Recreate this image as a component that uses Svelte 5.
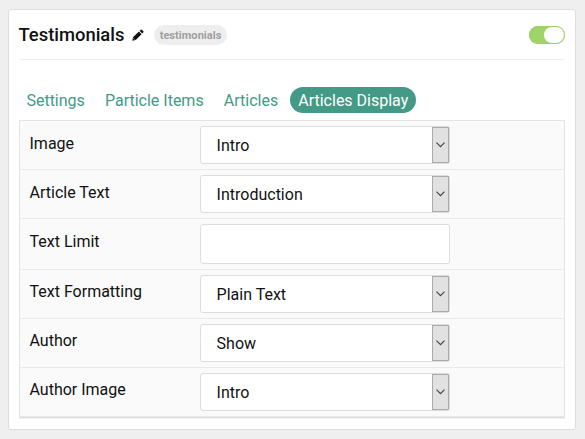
<script>
  const tabs = ['Settings', 'Particle Items', 'Articles', 'Articles Display'];
  const active = 'Articles Display';
  const fields = [
    { label: 'Image', value: 'Intro' },
    { label: 'Article Text', value: 'Introduction' },
    { label: 'Text Limit', input: true },
    { label: 'Text Formatting', value: 'Plain Text' },
    { label: 'Author', value: 'Show' },
    { label: 'Author Image', value: 'Intro' }
  ];
</script>

<main>
  <section class="card">
    <header>
      <h4>Testimonials</h4>
      <svg class="pencil" width="12" height="12" viewBox="0 0 12 12">
        <path fill="#111" d="M.3 11.7 1 8.2 6.9 2.5 9.6 5.2 3.8 11ZM7.6 1.8 8.8.7Q9.3.3 9.8.8L11.4 2.3Q11.8 2.8 11.4 3.3L10.2 4.5Z" />
        <path fill="none" stroke="#fff" stroke-width=".6" d="M1.5 9.3 2.8 10.6" />
      </svg>
      <span class="badge">testimonials</span>
      <span class="toggle"><i></i></span>
    </header>
    <nav>
      {#each tabs as tab}
        <a class:active={tab === active}>{tab}</a>
      {/each}
    </nav>
    <div class="panel">
      {#each fields as field, i}
        <div class="row">
          <span class="label" class:upper={i > 2}>{field.label}</span>
          {#if field.input}
            <div class="box input"></div>
          {:else}
            <div class="box">
              <span class="value">{field.value}</span>
              <span class="arrow">
                <svg width="9" height="6" viewBox="0 0 9 6">
                  <path d="M.5 .7 4.5 4.7 8.5 .7" fill="none" stroke="#444" stroke-width="1.15" />
                </svg>
              </span>
            </div>
          {/if}
        </div>
      {/each}
    </div>
  </section>
</main>

<style>
  :global(body) { background: #efefef; }
  main {
    box-sizing: border-box;
    height: 439px;
    padding: 9px 9px 9px 8px;
    font: 16px/24px Roboto, sans-serif;
    color: #111;
  }
  .card {
    box-sizing: border-box;
    height: 421px;
    padding: 0 10px;
    background: #fff;
    border: 1px solid #ddd;
    border-radius: 3px;
  }
  header {
    display: flex;
    align-items: center;
    box-sizing: border-box;
    height: 50px;
    border-bottom: 1px solid #eee;
  }
  h4 {
    margin: 0 0 0 -0.5px;
    width: 106.5px;
    font-size: 18.4px;
    font-weight: 500;
    white-space: nowrap;
  }
  .pencil { margin: 1px 10.5px 0 6.5px; }
  .badge {
    box-sizing: border-box;
    width: 73px;
    height: 20px;
    text-align: center;
    border-radius: 10px;
    background: #eee;
    color: #9f9f9f;
    font-size: 11.1px;
    font-weight: 700;
    line-height: 21px;
  }
  .toggle {
    box-sizing: border-box;
    width: 36px;
    height: 18px;
    margin-left: auto;
    padding: 1px;
    display: flex;
    justify-content: flex-end;
    border-radius: 9px;
    background: #a0d468;
    box-shadow: inset 0 0 1px #78aa48;
  }
  .toggle i {
    width: 20px;
    height: 16px;
    border-radius: 8px;
    background: #fff;
  }
  nav {
    display: flex;
    padding-top: 27px;
    height: 33px;
    margin-left: -0.6px;
  }
  a {
    height: 26px;
    margin-right: 4.1px;
    padding: 0 8px;
    border-radius: 13px;
    color: #439a86;
    line-height: 27px;
    white-space: nowrap;
  }
  a.active { background: #439a86; color: #fff; }
  .panel {
    border: 1px solid #e3e3e3;
    border-bottom-color: #ddd;
    background: #fafafa;
    box-shadow: 0 1px 0 #f2f2f2;
  }
  .row {
    display: flex;
    padding: 5px 10px 5px 9.5px;
    border-bottom: 1px solid #e9e9e9;
  }
  .label { width: 170.5px; line-height: 36px; }
  .upper { line-height: 34px; }
  .box {
    box-sizing: border-box;
    display: flex;
    justify-content: space-between;
    width: 250px;
    height: 38px;
    border: 1px solid #ddd;
    border-radius: 3px;
    background: #fff;
    line-height: 38px;
  }
  .input { height: 40px; }
  .value { padding-left: 15.6px; }
  .arrow {
    box-sizing: border-box;
    display: flex;
    align-items: center;
    justify-content: center;
    width: 17px;
    height: 36px;
    border: 1px solid #aaa;
    background: #e1e1e1;
  }
</style>
